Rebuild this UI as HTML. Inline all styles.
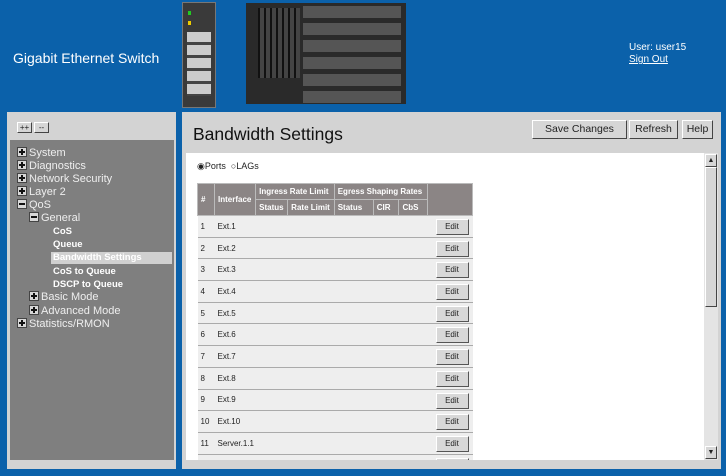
<!DOCTYPE html>
<html><head><style>
body{margin:0;width:726px;height:476px;background:#0b61aa;font-family:"Liberation Sans",sans-serif;position:relative;overflow:hidden}
.a{position:absolute}
.title{left:13px;top:50px;color:#fff;font-size:14px}
.user{left:629px;top:42px;color:#fff;font-size:10px;line-height:12px}
.left{left:7px;top:112px;width:169px;height:357px;background:#d3d3d3}
.tree{left:10px;top:140px;width:164px;height:320px;background:#7f7f7f}
.ti{position:absolute;color:#eee;font-size:11px;line-height:13px}
.ti b{font-weight:bold;font-size:9.5px;color:#fff}
.pm{display:inline-block;width:8px;height:8px;background:#d8d8d8;border:1px solid #444;vertical-align:-1px;margin-right:2px;position:relative}
.pm:before{content:"";position:absolute;left:1px;top:3px;width:6px;height:2px;background:#111}
.pm.p:after{content:"";position:absolute;left:3px;top:1px;width:2px;height:6px;background:#111}
.right{left:182px;top:112px;width:539px;height:357px;background:#d3d3d3}
.white{left:186px;top:153px;width:518px;height:307px;background:#fff;overflow:hidden}
.btn{position:absolute;background:#d6d6d6;border:1px solid;border-color:#fff #444 #444 #fff;font-size:10.5px;text-align:center;color:#222;box-sizing:border-box}
table{border-collapse:collapse;font-size:8px;position:absolute;left:11px;top:30px;width:276px}
th{background:#8b8585;color:#fff;border:1px solid #bbb;font-size:8px;text-align:left;padding:0 3px;height:15px}
td{background:#eeeeee;border-bottom:1px solid #aaa;height:20.7px;padding:0 3px;color:#222}
.e{position:relative}
.e span{position:absolute;right:4px;top:3px;width:33px;height:16px;background:#d8d8d8;border:1px solid;border-color:#fff #555 #555 #fff;box-sizing:border-box;text-align:center;line-height:14px;font-size:8px}
</style></head><body>
<div class="a title">Gigabit Ethernet Switch</div>
<div class="a" style="left:182px;top:2px;width:32px;height:104px;background:#3a3a3a;border:1px solid #777">
 <div class="a" style="left:5px;top:8px;width:3px;height:4px;background:#2c2"></div>
 <div class="a" style="left:5px;top:18px;width:3px;height:4px;background:#ec0"></div>
 <div class="a" style="left:4px;top:29px;width:24px;height:64px;background:repeating-linear-gradient(#ccc 0 10px,#444 10px 13px)"></div>
</div>
<div class="a" style="left:246px;top:3px;width:160px;height:101px;background:#2a2a2a"></div>
<div class="a" style="left:303px;top:3px;width:98px;height:101px;background:
repeating-linear-gradient(#2a2a2a 0 3px,#555 3px 15px,#2a2a2a 15px 17px)"></div>
<div class="a" style="left:258px;top:8px;width:42px;height:70px;background:repeating-linear-gradient(90deg,#111 0 2px,#444 2px 6px)"></div>
<div class="a user">User: user15<br><u>Sign Out</u></div>

<div class="a left"></div>
<div class="btn" style="left:17px;top:122px;width:15px;height:11px;font-size:8px;line-height:9px">++</div>
<div class="btn" style="left:34px;top:122px;width:15px;height:11px;font-size:8px;line-height:9px">--</div>
<div class="a tree"></div>
<div class="a" style="left:51px;top:252px;width:121px;height:12px;background:#d0d0d0"></div>
<div class="ti" style="left:17px;top:147px"><span class="pm p"></span>System</div>
<div class="ti" style="left:17px;top:160px"><span class="pm p"></span>Diagnostics</div>
<div class="ti" style="left:17px;top:173px"><span class="pm p"></span>Network Security</div>
<div class="ti" style="left:17px;top:186px"><span class="pm p"></span>Layer 2</div>
<div class="ti" style="left:17px;top:199px"><span class="pm"></span>QoS</div>
<div class="ti" style="left:29px;top:212px"><span class="pm"></span>General</div>
<div class="ti" style="left:53px;top:225px"><b>CoS</b></div>
<div class="ti" style="left:53px;top:238px"><b>Queue</b></div>
<div class="ti" style="left:53px;top:251px"><b>Bandwidth Settings</b></div>
<div class="ti" style="left:53px;top:265px"><b>CoS to Queue</b></div>
<div class="ti" style="left:53px;top:278px"><b>DSCP to Queue</b></div>
<div class="ti" style="left:29px;top:291px"><span class="pm p"></span>Basic Mode</div>
<div class="ti" style="left:29px;top:305px"><span class="pm p"></span>Advanced Mode</div>
<div class="ti" style="left:17px;top:318px"><span class="pm p"></span>Statistics/RMON</div>

<div class="a right"></div>
<div class="a" style="left:193px;top:124px;font-size:17.5px;color:#111">Bandwidth Settings</div>
<div class="btn" style="left:532px;top:120px;width:95px;height:19px;line-height:17px">Save Changes</div>
<div class="btn" style="left:629px;top:120px;width:49px;height:19px;line-height:17px">Refresh</div>
<div class="btn" style="left:682px;top:120px;width:31px;height:19px;line-height:17px">Help</div>
<div class="a white">
 <div class="a" style="left:11px;top:8px;font-size:9px;color:#222">◉Ports &nbsp;○LAGs</div>
 <table>
 <tr><th rowspan="2" style="width:10px">#</th><th rowspan="2">Interface</th><th colspan="2">Ingress Rate Limit</th><th colspan="3">Egress Shaping Rates</th><th rowspan="2" style="width:38px"></th></tr>
 <tr><th>Status</th><th>Rate Limit</th><th>Status</th><th>CIR</th><th>CbS</th></tr>
 <tr><td>1</td><td colspan="6">Ext.1</td><td class="e"><span>Edit</span></td></tr>
 <tr><td>2</td><td colspan="6">Ext.2</td><td class="e"><span>Edit</span></td></tr>
 <tr><td>3</td><td colspan="6">Ext.3</td><td class="e"><span>Edit</span></td></tr>
 <tr><td>4</td><td colspan="6">Ext.4</td><td class="e"><span>Edit</span></td></tr>
 <tr><td>5</td><td colspan="6">Ext.5</td><td class="e"><span>Edit</span></td></tr>
 <tr><td>6</td><td colspan="6">Ext.6</td><td class="e"><span>Edit</span></td></tr>
 <tr><td>7</td><td colspan="6">Ext.7</td><td class="e"><span>Edit</span></td></tr>
 <tr><td>8</td><td colspan="6">Ext.8</td><td class="e"><span>Edit</span></td></tr>
 <tr><td>9</td><td colspan="6">Ext.9</td><td class="e"><span>Edit</span></td></tr>
 <tr><td>10</td><td colspan="6">Ext.10</td><td class="e"><span>Edit</span></td></tr>
 <tr><td>11</td><td colspan="6">Server.1.1</td><td class="e"><span>Edit</span></td></tr>
 <tr><td>12</td><td colspan="6">Server.1.2</td><td class="e"><span>Edit</span></td></tr>
 </table>
</div>
<div class="a" style="left:704px;top:153px;width:14px;height:307px;background:#e4e4e4"></div>
<div class="btn" style="left:705px;top:154px;width:12px;height:13px;font-size:7px;line-height:11px">▲</div>
<div class="btn" style="left:705px;top:167px;width:12px;height:140px"></div>
<div class="btn" style="left:705px;top:446px;width:12px;height:13px;font-size:7px;line-height:11px">▼</div>
</body></html>
